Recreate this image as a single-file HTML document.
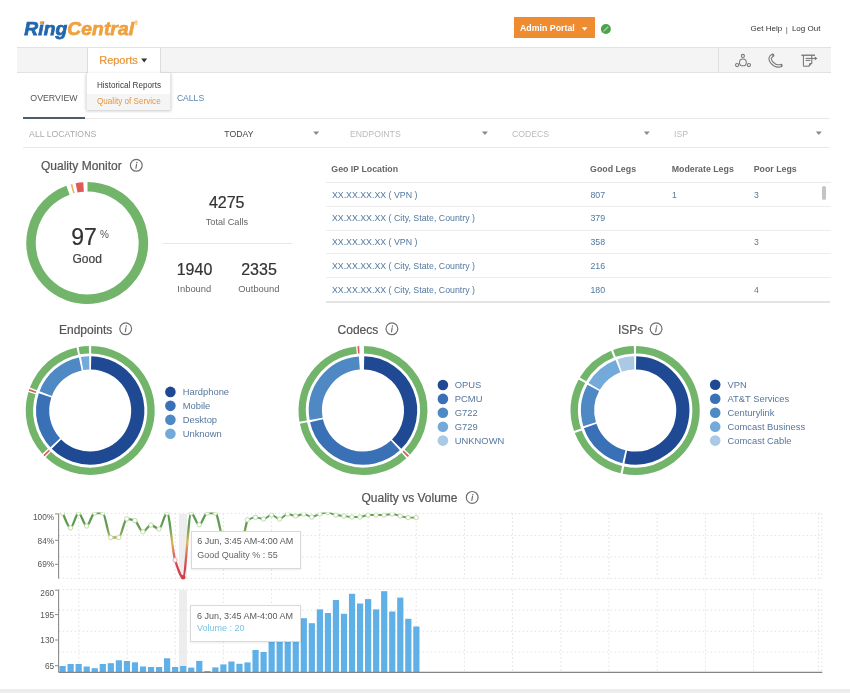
<!DOCTYPE html>
<html><head><meta charset="utf-8"><style>
html,body{margin:0;padding:0;background:#fff;width:850px;height:693px;overflow:hidden;position:relative;font-family:"Liberation Sans", sans-serif;}
.t{position:absolute;white-space:nowrap;line-height:1;}
.r{position:absolute;}
.s{position:absolute;left:0;top:0;}
svg text{font-family:"Liberation Sans", sans-serif;}
</style></head><body><div style="position:absolute;left:0;top:0;width:850px;height:693px;filter:blur(0.5px)">
<div class="t" style="left:24.3px;top:18.6px;font-size:19.2px;font-weight:bold;font-style:italic;letter-spacing:0.1px;-webkit-text-stroke:0.75px;"><span style="color:#2267ac">Ring</span><span style="color:#efa13e">Central</span><span style="color:#efa13e;font-size:5px;vertical-align:top;position:relative;top:2px;left:0px;-webkit-text-stroke:0">&#174;</span></div><div class="r" style="left:514.30px;top:17.20px;width:80.40px;height:20.60px;background:#ef8b30;"></div><div class="t" style="left:520.00px;top:23.95px;font-size:8.8px;color:#fff;font-weight:bold;font-style:normal;">Admin Portal</div><div class="t" style="left:750.60px;top:25.23px;font-size:8px;color:#333;font-weight:normal;font-style:normal;">Get Help</div><div class="t" style="left:785.80px;top:25.73px;font-size:8px;color:#555;font-weight:normal;font-style:normal;">|</div><div class="t" style="left:791.90px;top:25.23px;font-size:8px;color:#333;font-weight:normal;font-style:normal;">Log Out</div><div class="r" style="left:16.50px;top:47.00px;width:814.30px;height:26.00px;background:#f4f4f4;border-top:1px solid #e2e2e2;border-bottom:1px solid #e2e2e2;box-sizing:border-box;"></div><div class="r" style="left:86.80px;top:47.00px;width:74.20px;height:26.50px;background:#fff;border-left:1px solid #dcdcdc;border-right:1px solid #dcdcdc;border-top:1px solid #e2e2e2;box-sizing:border-box;"></div><div class="t" style="left:99.20px;top:54.99px;font-size:11px;color:#e8963a;font-weight:normal;font-style:normal;-webkit-text-stroke:0.22px;">Reports</div><div class="r" style="left:718.40px;top:47.00px;width:1.00px;height:26.00px;background:#e0e0e0;"></div><div class="r" style="left:86.30px;top:73.00px;width:84.50px;height:37.40px;background:#fff;box-shadow:0 1px 3px rgba(0,0,0,0.22);border:1px solid #e6e6e6;border-top:none;box-sizing:border-box;"></div><div class="r" style="left:87.30px;top:94.00px;width:82.50px;height:15.50px;background:#f5f5f5;"></div><div class="t" style="left:96.90px;top:82.10px;font-size:8.15px;color:#3a3a3a;font-weight:normal;font-style:normal;">Historical Reports</div><div class="t" style="left:97.00px;top:98.20px;font-size:8.15px;color:#e8963a;font-weight:normal;font-style:normal;">Quality of Service</div><div class="t" style="left:30.30px;top:94.05px;font-size:8.8px;color:#555;font-weight:normal;font-style:normal;">OVERVIEW</div><div class="t" style="left:176.90px;top:93.72px;font-size:8.6px;color:#5a86ad;font-weight:normal;font-style:normal;">CALLS</div><div class="r" style="left:23.00px;top:117.50px;width:807.00px;height:1.00px;background:#e8e8e8;"></div><div class="r" style="left:23.00px;top:116.80px;width:61.70px;height:2.00px;background:#4e5d6c;"></div><div class="t" style="left:29.10px;top:129.84px;font-size:8.7px;color:#aaa;font-weight:normal;font-style:normal;">ALL LOCATIONS</div><div class="t" style="left:224.30px;top:129.84px;font-size:8.7px;color:#444;font-weight:normal;font-style:normal;">TODAY</div><div class="t" style="left:350.00px;top:129.84px;font-size:8.7px;color:#bbb;font-weight:normal;font-style:normal;">ENDPOINTS</div><div class="t" style="left:512.00px;top:129.84px;font-size:8.7px;color:#bbb;font-weight:normal;font-style:normal;">CODECS</div><div class="t" style="left:674.00px;top:129.84px;font-size:8.7px;color:#bbb;font-weight:normal;font-style:normal;">ISP</div><div class="r" style="left:23.00px;top:147.00px;width:807.00px;height:1.00px;background:#e8e8e8;"></div><div class="t" style="left:41.00px;top:159.74px;font-size:12px;color:#555;font-weight:normal;font-style:normal;-webkit-text-stroke:0.22px;">Quality Monitor</div><div class="t" style="left:71.30px;top:226.13px;font-size:23px;color:#333;font-weight:normal;font-style:normal;-webkit-text-stroke:0.22px;">97</div><div class="t" style="left:100.00px;top:229.53px;font-size:10px;color:#555;font-weight:normal;font-style:normal;">%</div><div class="t" style="left:72.50px;top:252.94px;font-size:12px;color:#444;font-weight:normal;font-style:normal;-webkit-text-stroke:0.22px;">Good</div><div class="t" style="left:26.70px;width:400px;text-align:center;top:195.36px;font-size:16px;color:#333;font-weight:normal;font-style:normal;-webkit-text-stroke:0.22px;">4275</div><div class="t" style="left:26.90px;width:400px;text-align:center;top:218.11px;font-size:9.2px;color:#666;font-weight:normal;font-style:normal;">Total Calls</div><div class="r" style="left:162.00px;top:242.50px;width:129.50px;height:1.00px;background:#e8e8e8;"></div><div class="t" style="left:-5.50px;width:400px;text-align:center;top:262.06px;font-size:16px;color:#333;font-weight:normal;font-style:normal;-webkit-text-stroke:0.22px;">1940</div><div class="t" style="left:-5.70px;width:400px;text-align:center;top:283.64px;font-size:9.4px;color:#666;font-weight:normal;font-style:normal;">Inbound</div><div class="t" style="left:59.00px;width:400px;text-align:center;top:262.06px;font-size:16px;color:#333;font-weight:normal;font-style:normal;-webkit-text-stroke:0.22px;">2335</div><div class="t" style="left:58.90px;width:400px;text-align:center;top:283.64px;font-size:9.4px;color:#666;font-weight:normal;font-style:normal;">Outbound</div><div class="t" style="left:331.30px;top:164.85px;font-size:8.8px;color:#666;font-weight:bold;font-style:normal;">Geo IP Location</div><div class="t" style="left:590.10px;top:164.85px;font-size:8.8px;color:#666;font-weight:bold;font-style:normal;">Good Legs</div><div class="t" style="left:671.70px;top:164.85px;font-size:8.8px;color:#666;font-weight:bold;font-style:normal;">Moderate Legs</div><div class="t" style="left:753.70px;top:164.85px;font-size:8.8px;color:#666;font-weight:bold;font-style:normal;">Poor Legs</div><div class="r" style="left:325.60px;top:181.80px;width:505.00px;height:1.00px;background:#ebebeb;"></div><div class="r" style="left:325.60px;top:206.00px;width:505.00px;height:1.00px;background:#ededed;"></div><div class="r" style="left:325.60px;top:229.80px;width:505.00px;height:1.00px;background:#ededed;"></div><div class="r" style="left:325.60px;top:253.20px;width:505.00px;height:1.00px;background:#ededed;"></div><div class="r" style="left:325.60px;top:277.20px;width:505.00px;height:1.00px;background:#ededed;"></div><div class="r" style="left:325.60px;top:301.20px;width:504.00px;height:2.20px;background:#e4e4e4;"></div><div class="t" style="left:331.90px;top:190.85px;font-size:8.8px;color:#5178a2;font-weight:normal;font-style:normal;">XX.XX.XX.XX ( VPN )</div><div class="t" style="left:590.40px;top:190.85px;font-size:8.8px;color:#5178a2;font-weight:normal;font-style:normal;">807</div><div class="t" style="left:672.00px;top:191.02px;font-size:8.6px;color:#5f7892;font-weight:normal;font-style:normal;">1</div><div class="t" style="left:754.00px;top:191.02px;font-size:8.6px;color:#5f7892;font-weight:normal;font-style:normal;">3</div><div class="t" style="left:331.90px;top:213.85px;font-size:8.8px;color:#5178a2;font-weight:normal;font-style:normal;">XX.XX.XX.XX ( City, State, Country )</div><div class="t" style="left:590.40px;top:213.85px;font-size:8.8px;color:#5178a2;font-weight:normal;font-style:normal;">379</div><div class="t" style="left:331.90px;top:238.25px;font-size:8.8px;color:#5178a2;font-weight:normal;font-style:normal;">XX.XX.XX.XX ( VPN )</div><div class="t" style="left:590.40px;top:238.25px;font-size:8.8px;color:#5178a2;font-weight:normal;font-style:normal;">358</div><div class="t" style="left:754.00px;top:238.42px;font-size:8.6px;color:#5f7892;font-weight:normal;font-style:normal;">3</div><div class="t" style="left:331.90px;top:261.75px;font-size:8.8px;color:#5178a2;font-weight:normal;font-style:normal;">XX.XX.XX.XX ( City, State, Country )</div><div class="t" style="left:590.40px;top:261.75px;font-size:8.8px;color:#5178a2;font-weight:normal;font-style:normal;">216</div><div class="t" style="left:331.90px;top:285.65px;font-size:8.8px;color:#5178a2;font-weight:normal;font-style:normal;">XX.XX.XX.XX ( City, State, Country )</div><div class="t" style="left:590.40px;top:285.65px;font-size:8.8px;color:#5178a2;font-weight:normal;font-style:normal;">180</div><div class="t" style="left:754.00px;top:285.82px;font-size:8.6px;color:#5f7892;font-weight:normal;font-style:normal;">4</div><div class="r" style="left:821.60px;top:185.60px;width:4.60px;height:14.70px;background:#c4c4c4;border-radius:2px;"></div><div class="t" style="left:59.00px;top:323.64px;font-size:12px;color:#555;font-weight:normal;font-style:normal;-webkit-text-stroke:0.22px;">Endpoints</div><div class="t" style="left:182.70px;top:387.31px;font-size:9.4px;color:#56779e;font-weight:normal;font-style:normal;">Hardphone</div><div class="t" style="left:182.70px;top:401.28px;font-size:9.4px;color:#56779e;font-weight:normal;font-style:normal;">Mobile</div><div class="t" style="left:182.70px;top:415.25px;font-size:9.4px;color:#56779e;font-weight:normal;font-style:normal;">Desktop</div><div class="t" style="left:182.70px;top:429.22px;font-size:9.4px;color:#56779e;font-weight:normal;font-style:normal;">Unknown</div><div class="t" style="left:337.60px;top:323.64px;font-size:12px;color:#555;font-weight:normal;font-style:normal;-webkit-text-stroke:0.22px;">Codecs</div><div class="t" style="left:454.80px;top:380.41px;font-size:9.4px;color:#56779e;font-weight:normal;font-style:normal;">OPUS</div><div class="t" style="left:454.80px;top:394.31px;font-size:9.4px;color:#56779e;font-weight:normal;font-style:normal;">PCMU</div><div class="t" style="left:454.80px;top:408.21px;font-size:9.4px;color:#56779e;font-weight:normal;font-style:normal;">G722</div><div class="t" style="left:454.80px;top:422.11px;font-size:9.4px;color:#56779e;font-weight:normal;font-style:normal;">G729</div><div class="t" style="left:454.80px;top:436.01px;font-size:9.4px;color:#56779e;font-weight:normal;font-style:normal;">UNKNOWN</div><div class="t" style="left:618.00px;top:323.64px;font-size:12px;color:#555;font-weight:normal;font-style:normal;-webkit-text-stroke:0.22px;">ISPs</div><div class="t" style="left:727.50px;top:380.21px;font-size:9.4px;color:#56779e;font-weight:normal;font-style:normal;">VPN</div><div class="t" style="left:727.50px;top:394.16px;font-size:9.4px;color:#56779e;font-weight:normal;font-style:normal;">AT&amp;T Services</div><div class="t" style="left:727.50px;top:408.11px;font-size:9.4px;color:#56779e;font-weight:normal;font-style:normal;">Centurylink</div><div class="t" style="left:727.50px;top:422.06px;font-size:9.4px;color:#56779e;font-weight:normal;font-style:normal;">Comcast Business</div><div class="t" style="left:727.50px;top:436.01px;font-size:9.4px;color:#56779e;font-weight:normal;font-style:normal;">Comcast Cable</div><div class="t" style="left:361.50px;top:491.84px;font-size:12px;color:#555;font-weight:normal;font-style:normal;-webkit-text-stroke:0.22px;">Quality vs Volume</div><div class="r" style="left:179.30px;top:513.50px;width:8.20px;height:65.00px;background:#ededed;"></div><div class="r" style="left:179.30px;top:589.50px;width:8.20px;height:82.50px;background:#ededed;"></div><div class="t" style="left:-345.80px;width:400px;text-align:right;top:513.45px;font-size:8.3px;color:#555;font-weight:normal;font-style:normal;">100%</div><div class="t" style="left:-345.80px;width:400px;text-align:right;top:536.85px;font-size:8.3px;color:#555;font-weight:normal;font-style:normal;">84%</div><div class="t" style="left:-345.80px;width:400px;text-align:right;top:560.25px;font-size:8.3px;color:#555;font-weight:normal;font-style:normal;">69%</div><div class="t" style="left:-345.80px;width:400px;text-align:right;top:588.65px;font-size:8.3px;color:#555;font-weight:normal;font-style:normal;">260</div><div class="t" style="left:-345.80px;width:400px;text-align:right;top:610.55px;font-size:8.3px;color:#555;font-weight:normal;font-style:normal;">195</div><div class="t" style="left:-345.80px;width:400px;text-align:right;top:635.95px;font-size:8.3px;color:#555;font-weight:normal;font-style:normal;">130</div><div class="t" style="left:-345.80px;width:400px;text-align:right;top:661.75px;font-size:8.3px;color:#555;font-weight:normal;font-style:normal;">65</div><div class="r" style="left:0.00px;top:689.00px;width:850.00px;height:4.00px;background:#ededed;"></div>
<svg class="s" width="850" height="693" viewBox="0 0 850 693"><path d="M40.3,21.2 L44,21.2 L43.3,23.9 L39.6,23.9 Z" fill="#efa13e"/><path d="M581.85,27.25 L587.35,27.25 L584.60,30.75Z" fill="#fff"/><circle cx="605.9" cy="29" r="5" fill="#4ea24e"/><path d="M603.5,31.4 L608.2,26.7" stroke="#9cd89a" stroke-width="1.3"/><path d="M141.20,58.50 L147.20,58.50 L144.20,62.50Z" fill="#333"/><g stroke="#777" stroke-width="1.05" fill="none"><circle cx="742.9" cy="55.9" r="1.55"/><circle cx="742.9" cy="62.4" r="3.4"/><circle cx="737.1" cy="65" r="1.6"/><circle cx="748.9" cy="65" r="1.6"/></g><path d="M772.6,55.4 C769.6,57 769.3,59.6 771.9,62.6 C774.5,65.5 777.6,66.6 780.9,65.6" stroke="#7a7a7a" stroke-width="3.6" fill="none" stroke-linecap="round"/><path d="M772.6,55.4 C769.6,57 769.3,59.6 771.9,62.6 C774.5,65.5 777.6,66.6 780.9,65.6" stroke="#f4f4f4" stroke-width="1.3" fill="none" stroke-linecap="round" stroke-dasharray="17.2 100" stroke-dashoffset="-0.8"/><g stroke="#707070" stroke-width="1" fill="none"><path d="M801.3,55.2 L815,55.2" stroke-width="1.3"/><path d="M803.4,55.2 L803.4,66.2 L809.2,66.2 L811.8,63.4 L811.8,55.2"/><path d="M809.2,66.2 L809.6,63.6 L811.8,63.4"/><path d="M805.6,58.4 L815.2,58.4 M805.6,60.4 L810.4,60.4"/></g><path d="M814.8,56.6 L817.4,58.4 L814.8,60.2 Z" fill="#707070"/><path d="M313.20,131.55 L319.20,131.55 L316.20,135.05Z" fill="#8a8a8a"/><path d="M481.90,131.55 L487.90,131.55 L484.90,135.05Z" fill="#8a8a8a"/><path d="M643.80,131.55 L649.80,131.55 L646.80,135.05Z" fill="#8a8a8a"/><path d="M815.80,131.55 L821.80,131.55 L818.80,135.05Z" fill="#8a8a8a"/><circle cx="136.3" cy="165.3" r="5.9" fill="none" stroke="#6e6e6e" stroke-width="1.2"/><circle cx="136.90" cy="162.60" r="0.75" fill="#6e6e6e"/><path d="M136.60,164.20 L135.90,168.30" stroke="#6e6e6e" stroke-width="1.15" stroke-linecap="round"/><path d="M87.49,186.80 A56.2,56.2 0 1 1 67.98,190.19" stroke="#71b46a" stroke-width="9.5" fill="none"/><path d="M71.90,188.92 A56.2,56.2 0 0 1 73.51,188.49" stroke="#e8b860" stroke-width="9.5" fill="none"/><path d="M76.57,187.81 A56.2,56.2 0 0 1 83.57,186.92" stroke="#e05a5a" stroke-width="9.5" fill="none"/><circle cx="125.7" cy="328.8" r="5.9" fill="none" stroke="#6e6e6e" stroke-width="1.2"/><circle cx="126.30" cy="326.10" r="0.75" fill="#6e6e6e"/><path d="M126.00,327.70 L125.30,331.80" stroke="#6e6e6e" stroke-width="1.15" stroke-linecap="round"/><path d="M91.11,362.91 A47.6,47.6 0 1 1 56.48,444.10" stroke="#1f4a93" stroke-width="13.2" fill="none"/><path d="M55.22,442.78 A47.6,47.6 0 0 1 45.09,395.32" stroke="#3a70b6" stroke-width="13.2" fill="none"/><path d="M45.70,393.60 A47.6,47.6 0 0 1 80.30,363.94" stroke="#4f89c4" stroke-width="13.2" fill="none"/><path d="M82.10,363.59 A47.6,47.6 0 0 1 89.29,362.91" stroke="#74aad9" stroke-width="13.2" fill="none"/><path d="M91.16,349.71 A60.8,60.8 0 1 1 48.27,454.53" stroke="#71b46a" stroke-width="7.4" fill="none"/><path d="M47.28,453.57 A60.8,60.8 0 0 1 46.10,452.35" stroke="#e05a5a" stroke-width="7.4" fill="none"/><path d="M45.09,451.26 A60.8,60.8 0 0 1 31.93,393.13" stroke="#71b46a" stroke-width="7.4" fill="none"/><path d="M32.31,391.91 A60.8,60.8 0 0 1 32.85,390.30" stroke="#e05a5a" stroke-width="7.4" fill="none"/><path d="M33.36,388.91 A60.8,60.8 0 0 1 77.35,351.07" stroke="#71b46a" stroke-width="7.4" fill="none"/><path d="M79.22,350.70 A60.8,60.8 0 0 1 88.93,349.71" stroke="#71b46a" stroke-width="7.4" fill="none"/><circle cx="170.4" cy="391.90" r="5.3" fill="#1f4a93"/><circle cx="170.4" cy="405.87" r="5.3" fill="#3a70b6"/><circle cx="170.4" cy="419.84" r="5.3" fill="#4f89c4"/><circle cx="170.4" cy="433.81" r="5.3" fill="#74aad9"/><circle cx="391.9" cy="328.8" r="5.9" fill="none" stroke="#6e6e6e" stroke-width="1.2"/><circle cx="392.50" cy="326.10" r="0.75" fill="#6e6e6e"/><path d="M392.20,327.70 L391.50,331.80" stroke="#6e6e6e" stroke-width="1.15" stroke-linecap="round"/><path d="M364.08,362.91 A47.6,47.6 0 0 1 396.66,444.16" stroke="#1f4a93" stroke-width="13.2" fill="none"/><path d="M395.34,445.43 A47.6,47.6 0 0 1 316.51,420.72" stroke="#3a70b6" stroke-width="13.2" fill="none"/><path d="M316.15,418.93 A47.6,47.6 0 0 1 359.35,363.04" stroke="#4f89c4" stroke-width="13.2" fill="none"/><path d="M363.96,349.71 A60.8,60.8 0 0 1 407.32,452.12" stroke="#71b46a" stroke-width="7.4" fill="none"/><path d="M406.44,453.04 A60.8,60.8 0 0 1 405.08,454.38" stroke="#e05a5a" stroke-width="7.4" fill="none"/><path d="M404.00,455.40 A60.8,60.8 0 0 1 303.48,422.93" stroke="#71b46a" stroke-width="7.4" fill="none"/><path d="M303.14,421.16 A60.8,60.8 0 0 1 356.43,350.06" stroke="#71b46a" stroke-width="7.4" fill="none"/><path d="M357.70,349.93 A60.8,60.8 0 0 1 359.39,349.81" stroke="#e05a5a" stroke-width="7.4" fill="none"/><circle cx="442.9" cy="385.00" r="5.3" fill="#1f4a93"/><circle cx="442.9" cy="398.90" r="5.3" fill="#3a70b6"/><circle cx="442.9" cy="412.80" r="5.3" fill="#4f89c4"/><circle cx="442.9" cy="426.70" r="5.3" fill="#74aad9"/><circle cx="442.9" cy="440.60" r="5.3" fill="#a9c9e4"/><circle cx="656.1" cy="328.8" r="5.9" fill="none" stroke="#6e6e6e" stroke-width="1.2"/><circle cx="656.70" cy="326.10" r="0.75" fill="#6e6e6e"/><path d="M656.40,327.70 L655.70,331.80" stroke="#6e6e6e" stroke-width="1.15" stroke-linecap="round"/><path d="M636.11,362.91 A47.6,47.6 0 1 1 625.71,457.14" stroke="#1f4a93" stroke-width="13.2" fill="none"/><path d="M623.93,456.75 A47.6,47.6 0 0 1 590.19,426.00" stroke="#3a70b6" stroke-width="13.2" fill="none"/><path d="M589.63,424.26 A47.6,47.6 0 0 1 593.29,387.93" stroke="#4f89c4" stroke-width="13.2" fill="none"/><path d="M594.19,386.34 A47.6,47.6 0 0 1 617.99,366.12" stroke="#74aad9" stroke-width="13.2" fill="none"/><path d="M619.70,365.49 A47.6,47.6 0 0 1 634.29,362.91" stroke="#a9c9e4" stroke-width="13.2" fill="none"/><path d="M636.05,349.71 A60.8,60.8 0 1 1 623.39,470.14" stroke="#71b46a" stroke-width="7.4" fill="none"/><path d="M621.32,469.69 A60.8,60.8 0 0 1 578.25,431.79" stroke="#71b46a" stroke-width="7.4" fill="none"/><path d="M577.54,429.79 A60.8,60.8 0 0 1 581.92,381.21" stroke="#71b46a" stroke-width="7.4" fill="none"/><path d="M582.98,379.37 A60.8,60.8 0 0 1 612.42,354.13" stroke="#71b46a" stroke-width="7.4" fill="none"/><path d="M614.41,353.37 A60.8,60.8 0 0 1 633.93,349.71" stroke="#71b46a" stroke-width="7.4" fill="none"/><circle cx="715.2" cy="384.80" r="5.3" fill="#1f4a93"/><circle cx="715.2" cy="398.75" r="5.3" fill="#3a70b6"/><circle cx="715.2" cy="412.70" r="5.3" fill="#4f89c4"/><circle cx="715.2" cy="426.65" r="5.3" fill="#74aad9"/><circle cx="715.2" cy="440.60" r="5.3" fill="#a9c9e4"/><circle cx="472.2" cy="497.4" r="5.9" fill="none" stroke="#6e6e6e" stroke-width="1.2"/><circle cx="472.80" cy="494.70" r="0.75" fill="#6e6e6e"/><path d="M472.50,496.30 L471.80,500.40" stroke="#6e6e6e" stroke-width="1.15" stroke-linecap="round"/><path d="M58.6,513.4 L822,513.4" stroke="#e2e2e2" stroke-width="1" stroke-dasharray="1.6,2.4"/><path d="M58.6,535.6 L822,535.6" stroke="#e2e2e2" stroke-width="1" stroke-dasharray="1.6,2.4"/><path d="M58.6,556.9 L822,556.9" stroke="#e2e2e2" stroke-width="1" stroke-dasharray="1.6,2.4"/><path d="M58.6,578.4 L822,578.4" stroke="#e2e2e2" stroke-width="1" stroke-dasharray="1.6,2.4"/><path d="M78.80,513.4 L78.80,578.4" stroke="#e2e2e2" stroke-width="1" stroke-dasharray="1.6,2.4"/><path d="M127.00,513.4 L127.00,578.4" stroke="#e2e2e2" stroke-width="1" stroke-dasharray="1.6,2.4"/><path d="M175.20,513.4 L175.20,578.4" stroke="#e2e2e2" stroke-width="1" stroke-dasharray="1.6,2.4"/><path d="M223.40,513.4 L223.40,578.4" stroke="#e2e2e2" stroke-width="1" stroke-dasharray="1.6,2.4"/><path d="M271.60,513.4 L271.60,578.4" stroke="#e2e2e2" stroke-width="1" stroke-dasharray="1.6,2.4"/><path d="M319.80,513.4 L319.80,578.4" stroke="#e2e2e2" stroke-width="1" stroke-dasharray="1.6,2.4"/><path d="M368.00,513.4 L368.00,578.4" stroke="#e2e2e2" stroke-width="1" stroke-dasharray="1.6,2.4"/><path d="M416.20,513.4 L416.20,578.4" stroke="#e2e2e2" stroke-width="1" stroke-dasharray="1.6,2.4"/><path d="M464.40,513.4 L464.40,578.4" stroke="#e2e2e2" stroke-width="1" stroke-dasharray="1.6,2.4"/><path d="M512.60,513.4 L512.60,578.4" stroke="#e2e2e2" stroke-width="1" stroke-dasharray="1.6,2.4"/><path d="M560.80,513.4 L560.80,578.4" stroke="#e2e2e2" stroke-width="1" stroke-dasharray="1.6,2.4"/><path d="M609.00,513.4 L609.00,578.4" stroke="#e2e2e2" stroke-width="1" stroke-dasharray="1.6,2.4"/><path d="M657.20,513.4 L657.20,578.4" stroke="#e2e2e2" stroke-width="1" stroke-dasharray="1.6,2.4"/><path d="M705.40,513.4 L705.40,578.4" stroke="#e2e2e2" stroke-width="1" stroke-dasharray="1.6,2.4"/><path d="M753.60,513.4 L753.60,578.4" stroke="#e2e2e2" stroke-width="1" stroke-dasharray="1.6,2.4"/><path d="M818.60,513.4 L818.60,578.4" stroke="#e2e2e2" stroke-width="1" stroke-dasharray="1.6,2.4"/><path d="M821.80,513.4 L821.80,578.4" stroke="#e2e2e2" stroke-width="1" stroke-dasharray="1.6,2.4"/><path d="M58.6,589.5 L822,589.5" stroke="#e2e2e2" stroke-width="1" stroke-dasharray="1.6,2.4"/><path d="M58.6,610.1 L822,610.1" stroke="#e2e2e2" stroke-width="1" stroke-dasharray="1.6,2.4"/><path d="M58.6,631.3 L822,631.3" stroke="#e2e2e2" stroke-width="1" stroke-dasharray="1.6,2.4"/><path d="M58.6,652.1 L822,652.1" stroke="#e2e2e2" stroke-width="1" stroke-dasharray="1.6,2.4"/><path d="M78.80,589.5 L78.80,672.3" stroke="#e2e2e2" stroke-width="1" stroke-dasharray="1.6,2.4"/><path d="M127.00,589.5 L127.00,672.3" stroke="#e2e2e2" stroke-width="1" stroke-dasharray="1.6,2.4"/><path d="M175.20,589.5 L175.20,672.3" stroke="#e2e2e2" stroke-width="1" stroke-dasharray="1.6,2.4"/><path d="M223.40,589.5 L223.40,672.3" stroke="#e2e2e2" stroke-width="1" stroke-dasharray="1.6,2.4"/><path d="M271.60,589.5 L271.60,672.3" stroke="#e2e2e2" stroke-width="1" stroke-dasharray="1.6,2.4"/><path d="M319.80,589.5 L319.80,672.3" stroke="#e2e2e2" stroke-width="1" stroke-dasharray="1.6,2.4"/><path d="M368.00,589.5 L368.00,672.3" stroke="#e2e2e2" stroke-width="1" stroke-dasharray="1.6,2.4"/><path d="M416.20,589.5 L416.20,672.3" stroke="#e2e2e2" stroke-width="1" stroke-dasharray="1.6,2.4"/><path d="M464.40,589.5 L464.40,672.3" stroke="#e2e2e2" stroke-width="1" stroke-dasharray="1.6,2.4"/><path d="M512.60,589.5 L512.60,672.3" stroke="#e2e2e2" stroke-width="1" stroke-dasharray="1.6,2.4"/><path d="M560.80,589.5 L560.80,672.3" stroke="#e2e2e2" stroke-width="1" stroke-dasharray="1.6,2.4"/><path d="M609.00,589.5 L609.00,672.3" stroke="#e2e2e2" stroke-width="1" stroke-dasharray="1.6,2.4"/><path d="M657.20,589.5 L657.20,672.3" stroke="#e2e2e2" stroke-width="1" stroke-dasharray="1.6,2.4"/><path d="M705.40,589.5 L705.40,672.3" stroke="#e2e2e2" stroke-width="1" stroke-dasharray="1.6,2.4"/><path d="M753.60,589.5 L753.60,672.3" stroke="#e2e2e2" stroke-width="1" stroke-dasharray="1.6,2.4"/><path d="M818.60,589.5 L818.60,672.3" stroke="#e2e2e2" stroke-width="1" stroke-dasharray="1.6,2.4"/><path d="M821.80,589.5 L821.80,672.3" stroke="#e2e2e2" stroke-width="1" stroke-dasharray="1.6,2.4"/><rect x="59.50" y="666" width="6.2" height="6.30" fill="#5fb0e6"/><rect x="67.54" y="664" width="6.2" height="8.30" fill="#5fb0e6"/><rect x="75.58" y="664" width="6.2" height="8.30" fill="#5fb0e6"/><rect x="83.62" y="666.5" width="6.2" height="5.80" fill="#5fb0e6"/><rect x="91.66" y="668.2" width="6.2" height="4.10" fill="#5fb0e6"/><rect x="99.70" y="664" width="6.2" height="8.30" fill="#5fb0e6"/><rect x="107.74" y="663.2" width="6.2" height="9.10" fill="#5fb0e6"/><rect x="115.78" y="660.3" width="6.2" height="12.00" fill="#5fb0e6"/><rect x="123.82" y="661" width="6.2" height="11.30" fill="#5fb0e6"/><rect x="131.86" y="662.3" width="6.2" height="10.00" fill="#5fb0e6"/><rect x="139.90" y="666.5" width="6.2" height="5.80" fill="#5fb0e6"/><rect x="147.94" y="667" width="6.2" height="5.30" fill="#5fb0e6"/><rect x="155.98" y="667" width="6.2" height="5.30" fill="#5fb0e6"/><rect x="164.02" y="658.3" width="6.2" height="14.00" fill="#5fb0e6"/><rect x="172.06" y="667" width="6.2" height="5.30" fill="#5fb0e6"/><rect x="180.10" y="666" width="6.2" height="6.30" fill="#5fb0e6"/><rect x="188.14" y="667.6" width="6.2" height="4.70" fill="#5fb0e6"/><rect x="196.18" y="660.9" width="6.2" height="11.40" fill="#5fb0e6"/><rect x="204.22" y="671" width="6.2" height="1.30" fill="#5fb0e6"/><rect x="212.26" y="667.4" width="6.2" height="4.90" fill="#5fb0e6"/><rect x="220.30" y="664.4" width="6.2" height="7.90" fill="#5fb0e6"/><rect x="228.34" y="661.5" width="6.2" height="10.80" fill="#5fb0e6"/><rect x="236.38" y="663.8" width="6.2" height="8.50" fill="#5fb0e6"/><rect x="244.42" y="662.4" width="6.2" height="9.90" fill="#5fb0e6"/><rect x="252.46" y="650" width="6.2" height="22.30" fill="#5fb0e6"/><rect x="260.50" y="652" width="6.2" height="20.30" fill="#5fb0e6"/><rect x="268.54" y="630" width="6.2" height="42.30" fill="#5fb0e6"/><rect x="276.58" y="630" width="6.2" height="42.30" fill="#5fb0e6"/><rect x="284.62" y="630" width="6.2" height="42.30" fill="#5fb0e6"/><rect x="292.66" y="630" width="6.2" height="42.30" fill="#5fb0e6"/><rect x="300.70" y="618.2" width="6.2" height="54.10" fill="#5fb0e6"/><rect x="308.74" y="623.2" width="6.2" height="49.10" fill="#5fb0e6"/><rect x="316.78" y="609.4" width="6.2" height="62.90" fill="#5fb0e6"/><rect x="324.82" y="613" width="6.2" height="59.30" fill="#5fb0e6"/><rect x="332.86" y="600" width="6.2" height="72.30" fill="#5fb0e6"/><rect x="340.90" y="613.8" width="6.2" height="58.50" fill="#5fb0e6"/><rect x="348.94" y="593.8" width="6.2" height="78.50" fill="#5fb0e6"/><rect x="356.98" y="603.5" width="6.2" height="68.80" fill="#5fb0e6"/><rect x="365.02" y="599.1" width="6.2" height="73.20" fill="#5fb0e6"/><rect x="373.06" y="609.4" width="6.2" height="62.90" fill="#5fb0e6"/><rect x="381.10" y="591.2" width="6.2" height="81.10" fill="#5fb0e6"/><rect x="389.14" y="611.5" width="6.2" height="60.80" fill="#5fb0e6"/><rect x="397.18" y="597.6" width="6.2" height="74.70" fill="#5fb0e6"/><rect x="405.22" y="618.8" width="6.2" height="53.50" fill="#5fb0e6"/><rect x="413.26" y="626.5" width="6.2" height="45.80" fill="#5fb0e6"/><path d="M58.6,513.8 L58.6,578.4 M58.6,589.8 L58.6,672.3" stroke="#8a8a8a" stroke-width="1.1"/><path d="M58.6,672.4 L822.3,672.4" stroke="#858585" stroke-width="1.2"/><path d="M55,513.9 L58.6,513.9" stroke="#8a8a8a" stroke-width="1"/><path d="M55,540.3 L58.6,540.3" stroke="#8a8a8a" stroke-width="1"/><path d="M55,564.3 L58.6,564.3" stroke="#8a8a8a" stroke-width="1"/><path d="M55,590.2 L58.6,590.2" stroke="#8a8a8a" stroke-width="1"/><path d="M55,614.6 L58.6,614.6" stroke="#8a8a8a" stroke-width="1"/><path d="M55,640 L58.6,640" stroke="#8a8a8a" stroke-width="1"/><path d="M55,665.7 L58.6,665.7" stroke="#8a8a8a" stroke-width="1"/><defs><linearGradient id="lg" gradientUnits="userSpaceOnUse" x1="0" y1="513" x2="0" y2="578"><stop offset="0" stop-color="#5b9a4f"/><stop offset="0.22" stop-color="#639d52"/><stop offset="0.45" stop-color="#dcb85a"/><stop offset="0.62" stop-color="#dc7060"/><stop offset="0.8" stop-color="#d44a55"/><stop offset="1" stop-color="#d03c4a"/></linearGradient></defs><clipPath id="cp"><rect x="58" y="512.6" width="770" height="70"/></clipPath><g clip-path="url(#cp)"><path d="M62.50,513.00 C65.18,517.93 67.86,527.80 70.54,527.80 C73.22,527.80 75.90,513.00 78.58,513.00 C81.26,513.00 83.94,526.00 86.62,526.00 C89.30,526.00 91.98,513.00 94.66,513.00 C97.34,513.00 100.02,513.00 102.70,513.00 C105.38,513.00 108.06,537.50 110.74,537.50 C113.42,537.50 116.10,537.50 118.78,537.50 C121.46,537.50 124.14,518.80 126.82,518.80 C129.50,518.80 132.18,519.57 134.86,520.60 C137.54,521.63 140.22,531.80 142.90,531.80 C145.58,531.80 148.26,525.00 150.94,525.00 C153.62,525.00 156.30,529.00 158.98,529.00 C161.66,529.00 164.34,513.00 167.02,513.00 C169.70,513.00 172.38,551.57 175.06,560.00 C177.74,568.43 180.42,577.30 183.10,577.30 C185.78,577.30 188.46,513.00 191.14,513.00 C193.82,513.00 196.50,524.80 199.18,524.80 C201.86,524.80 204.54,513.00 207.22,513.00 C209.90,513.00 212.58,513.00 215.26,513.00 C217.94,513.00 220.62,535.89 223.30,540.00 C225.98,544.11 228.66,548.00 231.34,548.00 C234.02,548.00 236.70,548.00 239.38,548.00 C242.06,548.00 244.74,529.20 247.42,519.80" stroke="url(#lg)" stroke-width="2.3" fill="none" stroke-linejoin="round"/><path d="M247.42,519.80 C250.10,519.00 252.78,517.40 255.46,517.40 C258.14,517.40 260.82,519.00 263.50,519.00 C266.18,519.00 268.86,514.90 271.54,514.90 C274.22,514.90 276.90,519.00 279.58,519.00 C282.26,519.00 284.94,514.00 287.62,514.00 C290.30,514.00 292.98,516.00 295.66,516.00 C298.34,516.00 301.02,514.00 303.70,514.00 C306.38,514.00 309.06,517.00 311.74,517.00 C314.42,517.00 317.10,514.67 319.78,514.00 C322.46,513.33 325.14,512.50 327.82,512.50 C330.50,512.50 333.18,514.52 335.86,515.00 C338.54,515.48 341.22,515.67 343.90,516.00 C346.58,516.33 349.26,517.00 351.94,517.00 C354.62,517.00 357.30,517.00 359.98,517.00 C362.66,517.00 365.34,515.00 368.02,515.00 C370.70,515.00 373.38,515.00 376.06,515.00 C378.74,515.00 381.42,515.00 384.10,515.00 C386.78,515.00 389.46,514.00 392.14,514.00 C394.82,514.00 397.50,515.41 400.18,516.00 C402.86,516.59 405.54,517.60 408.22,517.60 C410.90,517.60 413.58,517.60 416.26,517.60" stroke="#62a056" stroke-width="1.9" fill="none" stroke-linejoin="round"/><circle cx="62.50" cy="513.00" r="2.2" fill="#fff" stroke="#b8d8a0" stroke-width="0.9"/><circle cx="70.54" cy="527.80" r="2.2" fill="#fff" stroke="#b8d8a0" stroke-width="0.9"/><circle cx="78.58" cy="513.00" r="2.2" fill="#fff" stroke="#b8d8a0" stroke-width="0.9"/><circle cx="86.62" cy="526.00" r="2.2" fill="#fff" stroke="#b8d8a0" stroke-width="0.9"/><circle cx="94.66" cy="513.00" r="2.2" fill="#fff" stroke="#b8d8a0" stroke-width="0.9"/><circle cx="102.70" cy="513.00" r="2.2" fill="#fff" stroke="#b8d8a0" stroke-width="0.9"/><circle cx="110.74" cy="537.50" r="2.2" fill="#fff" stroke="#b8d8a0" stroke-width="0.9"/><circle cx="118.78" cy="537.50" r="2.2" fill="#fff" stroke="#b8d8a0" stroke-width="0.9"/><circle cx="126.82" cy="518.80" r="2.2" fill="#fff" stroke="#b8d8a0" stroke-width="0.9"/><circle cx="134.86" cy="520.60" r="2.2" fill="#fff" stroke="#b8d8a0" stroke-width="0.9"/><circle cx="142.90" cy="531.80" r="2.2" fill="#fff" stroke="#b8d8a0" stroke-width="0.9"/><circle cx="150.94" cy="525.00" r="2.2" fill="#fff" stroke="#b8d8a0" stroke-width="0.9"/><circle cx="158.98" cy="529.00" r="2.2" fill="#fff" stroke="#b8d8a0" stroke-width="0.9"/><circle cx="167.02" cy="513.00" r="2.2" fill="#fff" stroke="#b8d8a0" stroke-width="0.9"/><circle cx="175.06" cy="560.00" r="2.2" fill="#fff" stroke="#e8a0a0" stroke-width="0.9"/><circle cx="183.10" cy="577.30" r="2.3" fill="#d23c4a"/><circle cx="191.14" cy="513.00" r="2.2" fill="#fff" stroke="#b8d8a0" stroke-width="0.9"/><circle cx="199.18" cy="524.80" r="2.2" fill="#fff" stroke="#b8d8a0" stroke-width="0.9"/><circle cx="207.22" cy="513.00" r="2.2" fill="#fff" stroke="#b8d8a0" stroke-width="0.9"/><circle cx="215.26" cy="513.00" r="2.2" fill="#fff" stroke="#b8d8a0" stroke-width="0.9"/><circle cx="247.42" cy="519.80" r="2.2" fill="#fff" stroke="#b8d8a0" stroke-width="0.9"/><circle cx="255.46" cy="517.40" r="2.2" fill="#fff" stroke="#b8d8a0" stroke-width="0.9"/><circle cx="263.50" cy="519.00" r="2.2" fill="#fff" stroke="#b8d8a0" stroke-width="0.9"/><circle cx="271.54" cy="514.90" r="2.2" fill="#fff" stroke="#b8d8a0" stroke-width="0.9"/><circle cx="279.58" cy="519.00" r="2.2" fill="#fff" stroke="#b8d8a0" stroke-width="0.9"/><circle cx="287.62" cy="514.00" r="2.2" fill="#fff" stroke="#b8d8a0" stroke-width="0.9"/><circle cx="295.66" cy="516.00" r="2.2" fill="#fff" stroke="#b8d8a0" stroke-width="0.9"/><circle cx="303.70" cy="514.00" r="2.2" fill="#fff" stroke="#b8d8a0" stroke-width="0.9"/><circle cx="311.74" cy="517.00" r="2.2" fill="#fff" stroke="#b8d8a0" stroke-width="0.9"/><circle cx="319.78" cy="514.00" r="2.2" fill="#fff" stroke="#b8d8a0" stroke-width="0.9"/><circle cx="327.82" cy="512.50" r="2.2" fill="#fff" stroke="#b8d8a0" stroke-width="0.9"/><circle cx="335.86" cy="515.00" r="2.2" fill="#fff" stroke="#b8d8a0" stroke-width="0.9"/><circle cx="343.90" cy="516.00" r="2.2" fill="#fff" stroke="#b8d8a0" stroke-width="0.9"/><circle cx="351.94" cy="517.00" r="2.2" fill="#fff" stroke="#b8d8a0" stroke-width="0.9"/><circle cx="359.98" cy="517.00" r="2.2" fill="#fff" stroke="#b8d8a0" stroke-width="0.9"/><circle cx="368.02" cy="515.00" r="2.2" fill="#fff" stroke="#b8d8a0" stroke-width="0.9"/><circle cx="376.06" cy="515.00" r="2.2" fill="#fff" stroke="#b8d8a0" stroke-width="0.9"/><circle cx="384.10" cy="515.00" r="2.2" fill="#fff" stroke="#b8d8a0" stroke-width="0.9"/><circle cx="392.14" cy="514.00" r="2.2" fill="#fff" stroke="#b8d8a0" stroke-width="0.9"/><circle cx="400.18" cy="516.00" r="2.2" fill="#fff" stroke="#b8d8a0" stroke-width="0.9"/><circle cx="408.22" cy="517.60" r="2.2" fill="#fff" stroke="#b8d8a0" stroke-width="0.9"/><circle cx="416.26" cy="517.60" r="2.2" fill="#fff" stroke="#b8d8a0" stroke-width="0.9"/></g></svg>
<div class="r" style="left:190.5px;top:530.5px;width:110.30000000000001px;height:38.799999999999955px;background:#fff;border:1px solid #d9d9d9;box-sizing:border-box;box-shadow:0 1px 2px rgba(0,0,0,0.08)"></div><div class="t" style="left:197.2px;top:537.38px;font-size:9px;color:#5a5a5a">6 Jun, 3:45 AM-4:00 AM</div><div class="t" style="left:197.2px;top:551.18px;font-size:9px;color:#666">Good Quality % : 55</div><div class="r" style="left:190.3px;top:605px;width:110.39999999999998px;height:37.39999999999998px;background:#fff;border:1px solid #d9d9d9;box-sizing:border-box;box-shadow:0 1px 2px rgba(0,0,0,0.08)"></div><div class="t" style="left:197.0px;top:611.88px;font-size:9px;color:#5a5a5a">6 Jun, 3:45 AM-4:00 AM</div><div class="t" style="left:197.0px;top:624.18px;font-size:9px;color:#78c2e6">Volume : 20</div>
</div></body></html>
